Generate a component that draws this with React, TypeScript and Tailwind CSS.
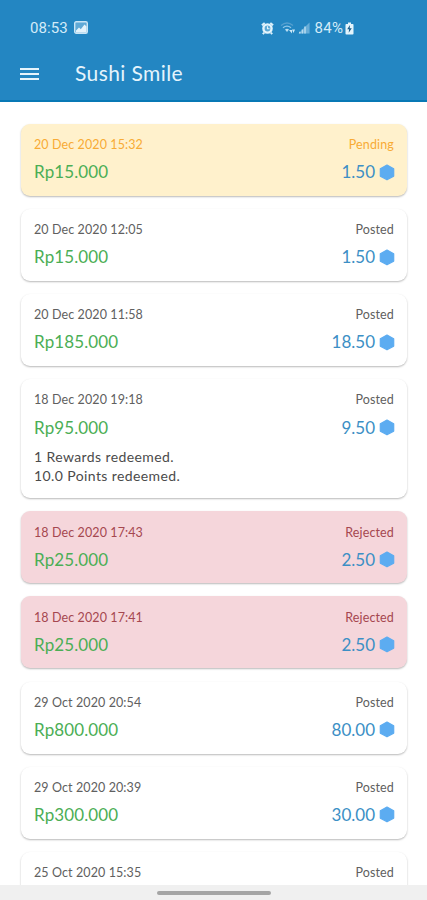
import React from "react";

type Status = "Pending" | "Posted" | "Rejected";

interface Transaction {
  date: string;
  status: Status;
  amount?: string;
  points?: string;
  notes?: string[];
}

const transactions: Transaction[] = [
  { date: "20 Dec 2020 15:32", status: "Pending", amount: "Rp15.000", points: "1.50" },
  { date: "20 Dec 2020 12:05", status: "Posted", amount: "Rp15.000", points: "1.50" },
  { date: "20 Dec 2020 11:58", status: "Posted", amount: "Rp185.000", points: "18.50" },
  {
    date: "18 Dec 2020 19:18",
    status: "Posted",
    amount: "Rp95.000",
    points: "9.50",
    notes: ["1 Rewards redeemed.", "10.0 Points redeemed."],
  },
  { date: "18 Dec 2020 17:43", status: "Rejected", amount: "Rp25.000", points: "2.50" },
  { date: "18 Dec 2020 17:41", status: "Rejected", amount: "Rp25.000", points: "2.50" },
  { date: "29 Oct 2020 20:54", status: "Posted", amount: "Rp800.000", points: "80.00" },
  { date: "29 Oct 2020 20:39", status: "Posted", amount: "Rp300.000", points: "30.00" },
  { date: "25 Oct 2020 15:35", status: "Posted" },
];

const cardColors: Record<Status, string> = {
  Pending: "bg-[#fff1cc]",
  Posted: "bg-white",
  Rejected: "bg-[#f5d6db]",
};

const labelColors: Record<Status, string> = {
  Pending: "text-[#f8ab35]",
  Posted: "text-[#606060]",
  Rejected: "text-[#a5474f]",
};

function PictureIcon() {
  return (
    <svg width="14" height="13" viewBox="0 0 14 13" className="mb-[2px] ml-[6px]">
      <rect x="0.7" y="0.7" width="12.6" height="11.6" rx="1.5" fill="#5fa9d6" stroke="#c9e5f5" strokeWidth="1.4" />
      <path d="M2 9.5 5 6.5l1.800 1.700L10.500 3.500l2 2v6H2z" fill="#e4f3fb" />
    </svg>
  );
}

function AlarmIcon() {
  return (
    <svg width="13" height="13" viewBox="0 0 14 14">
      <path d="M1 3.6 4 1M13 3.6 10 1M3.4 11.4 2 13M10.600 11.400 12 13" stroke="#d9effa" strokeWidth="2.200" />
      <circle cx="7" cy="7" r="4.400" fill="#5aa8d5" stroke="#e3f4fc" strokeWidth="2.600" />
      <path d="M7 4.500v2.700h2.200" fill="none" stroke="#e3f4fc" strokeWidth="1.200" />
    </svg>
  );
}

function WifiIcon() {
  return (
    <svg width="16" height="14" viewBox="0 0 16 14" className="ml-[6px]" fill="none">
      <path d="M1 4.500Q7 -0.500 13 4.500" stroke="#559fcf" strokeWidth="1.300" />
      <path d="M3 6.700Q7 3.500 11 6.700" stroke="#91c7e8" strokeWidth="1.300" />
      <path d="M5 8.600Q7 7 9 8.600L7 11z" fill="#b9def2" />
      <path d="M9 9h3v3.500zM12 8.500h3l-1.500 3.500z" fill="#cce8f7" />
    </svg>
  );
}

function SignalIcon() {
  return (
    <svg width="12" height="12" viewBox="0 0 13 13" className="ml-[2px]">
      <path d="M0.500 12.500 12.500 0.500v12z" fill="#67add8" />
      <path d="M2 10.500v2M4.800 8v4.500M7.600 5v7.500" stroke="#b5daef" strokeWidth="1.700" />
    </svg>
  );
}

function BatteryIcon() {
  return (
    <svg width="9" height="13" viewBox="0 0 9 13" className="ml-[1.500px]">
      <path d="M3 0.500h3v1.400h1.700q.8 0 .8.800v9q0 .8-.8.800H1.300q-.8 0-.8-.8v-9q0-.8.8-.8H3z" fill="#e3f4fc" />
      <path d="M5 3 2.200 7.200h1.900L3.700 10.800 6.800 6.200H4.700z" fill="#185b89" />
    </svg>
  );
}

function PointsIcon() {
  return (
    <svg width="16" height="17" viewBox="0 0 16 17" className="-mr-px ml-1 shrink-0">
      <path d="M8 1 14.700 4.700v7.400L8 15.800 1.300 12.100V4.700z" fill="#5cacf1" stroke="#5cacf1" strokeWidth="1.200" strokeLinejoin="round" />
    </svg>
  );
}

function StatusBar() {
  return (
    <div className="flex h-[54px] items-center pt-[2px] pr-[73px] pl-[30px] font-[Roboto,sans-serif] text-[15px] text-[#d3ebf8]">
      <span className="tracking-[0.1px]">08:53</span>
      <PictureIcon />
      <div className="ml-auto flex items-center">
        <AlarmIcon />
        <WifiIcon />
        <SignalIcon />
        <span className="ml-[4px] tracking-[0.4px]">84%</span>
        <BatteryIcon />
      </div>
    </div>
  );
}

function TransactionCard({ item }: { item: Transaction }) {
  return (
    <article
      className={`shrink-0 rounded-[9px] px-[13px] pt-3 shadow-[0_1px_2px_rgba(0,0,0,0.28)] ${cardColors[item.status]} ${item.notes ? "h-[119px]" : "h-[72px]"}`}
    >
      <div className={`flex h-[18px] items-center justify-between text-[12.5px] ${labelColors[item.status]}`}>
        <span className="pt-px tracking-[0.1px]">{item.date}</span>
        <span className="pt-px tracking-[0.15px]">{item.status}</span>
      </div>
      {item.amount && (
        <div className="mt-[6px] flex h-6 items-center justify-between text-[17px]">
          <span className="tracking-[0.1px] text-[#4bae55]">{item.amount}</span>
          <span className="flex items-center text-[#3c8fc5]">
            <span>{item.points}</span>
            <PointsIcon />
          </span>
        </div>
      )}
      {item.notes && (
        <div className="mt-[7.500px] text-[14px] leading-[19px] tracking-[0.4px] text-[#4b4b4b]">
          {item.notes.map((note) => (
            <p key={note}>{note}</p>
          ))}
        </div>
      )}
    </article>
  );
}

export default function App() {
  return (
    <div className="flex h-[900px] w-[427px] flex-col overflow-hidden bg-white font-[Lato,'Open_Sans',sans-serif]">
      <header className="h-[102px] shrink-0 border-b-2 border-[#0878b5] bg-[#2386c2]">
        <StatusBar />
        <div className="flex h-[39px] items-center pl-5">
          <svg width="19" height="14" viewBox="0 0 19 14" aria-label="Menu">
            <path d="M0 2h19M0 7h19M0 12h19" stroke="#e5f4fc" strokeWidth="2" />
          </svg>
          <h1 className="ml-9 pb-px text-[21px] tracking-[0.4px] text-[#e5f4fc]">Sushi Smile</h1>
        </div>
      </header>
      <main className="flex min-h-0 flex-1 flex-col gap-[13.100px] overflow-hidden pt-[22px] pr-[20px] pl-[21px]">
        {transactions.map((item) => (
          <TransactionCard key={item.date} item={item} />
        ))}
      </main>
      <footer className="flex h-[15px] shrink-0 items-center justify-center bg-[#f0f0f0]">
        <div className="h-1 w-[114px] rounded-full bg-[#a5a5a5]" />
      </footer>
    </div>
  );
}
